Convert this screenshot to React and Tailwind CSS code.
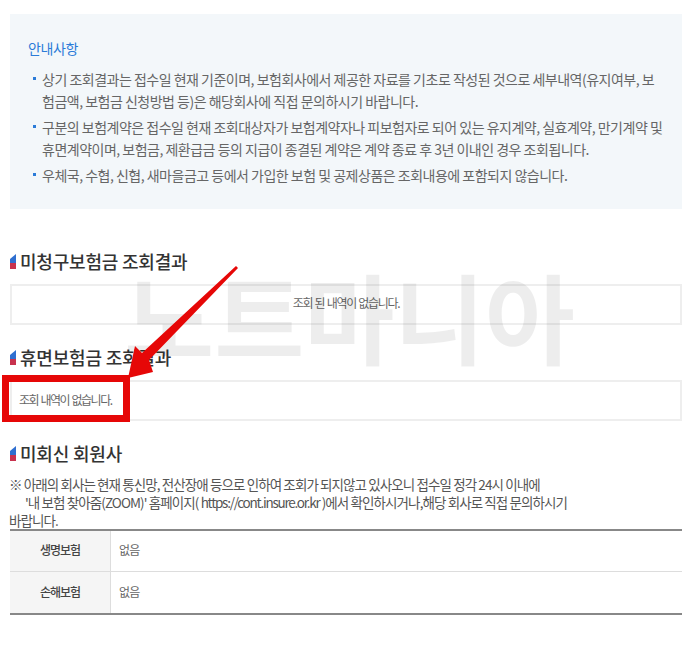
const font = { fontFamily: '"Noto Sans CJK KR", "Noto Sans", sans-serif' };

const notices = [
  "상기 조회결과는 접수일 현재 기준이며, 보험회사에서 제공한 자료를 기초로 작성된 것으로 세부내역(유지여부, 보험금액, 보험금 신청방법 등)은 해당회사에 직접 문의하시기 바랍니다.",
  "구분의 보험계약은 접수일 현재 조회대상자가 보험계약자나 피보험자로 되어 있는 유지계약, 실효계약, 만기계약 및 휴면계약이며, 보험금, 제환급금 등의 지급이 종결된 계약은 계약 종료 후 3년 이내인 경우 조회됩니다.",
  "우체국, 수협, 신협, 새마을금고 등에서 가입한 보험 및 공제상품은 조회내용에 포함되지 않습니다.",
];

const SectionTitle = ({ children, className }) => (
  <h2 className={`flex items-center h-[24px] text-[18px] font-medium text-[#333] tracking-[-0.2px] ${className}`}>
    <svg width="7" height="15" viewBox="0 0 7 15" className="mr-[3px] shrink-0">
      <path d="M0 5 L6 0 V9 H0 Z" fill="#2f6fd0" />
      <path d="M0 9 H6 V15 H0 Z" fill="#c8324e" />
    </svg>
    {children}
  </h2>
);

export default function App() {
  return (
    <div className="relative w-[700px] h-[648px] bg-white overflow-hidden" style={font}>
      <div className="pt-[14px] pl-[10px] pr-[18px]">
        {/* 안내사항 */}
        <div className="h-[195px] bg-[#f3f7fa] pt-[23px] pl-[18px] pr-[18px]">
          <p className="text-[14px] leading-[22px] text-[#2b7bd8] tracking-[-0.4px]">안내사항</p>
          <ul className="mt-[9px]">
            {notices.map((text) => (
              <li key={text} className="relative pl-[14px] mb-[4px] text-[14px] leading-[22px] text-[#666] tracking-[-0.5px]">
                <span className="absolute left-[5px] top-[9px] w-[3px] h-[3px] bg-[#2b7bd8]" />
                {text}
              </li>
            ))}
          </ul>
        </div>

        <SectionTitle className="mt-[40px]">미청구보험금 조회결과</SectionTitle>
        <div className="mt-[11px] h-[41px] border-2 border-[#eeeeee] flex items-center justify-center pb-[3px] text-[12px] text-[#666] tracking-[-1.3px] [word-spacing:1px]">
          조회 된 내역이 없습니다.
        </div>

        <SectionTitle className="mt-[20px]">휴면보험금 조회결과</SectionTitle>
        <div className="mt-[11px] h-[41px] border-2 border-[#eeeeee] flex items-center pl-[7px] pb-[2px] text-[12px] text-[#666] tracking-[-1.45px] [word-spacing:1px]">
          조회 내역이 없습니다.
        </div>

        <SectionTitle className="mt-[20px]">미회신 회원사</SectionTitle>
        <p className="mt-[10px] -ml-[1px] text-[13.5px] leading-[18px] text-[#555] tracking-[-0.9px] w-[590px]">
          ※ 아래의 회사는 현재 통신망, 전산장애 등으로 인하여 조회가 되지않고 있사오니 접수일 정각 24시 이내에
          <br />
          <span className="pl-[16px]">
            '내 보험 찾아줌(ZOOM)' 홈페이지( <span className="tracking-[-1.25px]">https://cont.insure.or.kr</span> )에서 확인하시거나,해당 회사로 직접 문의하시기
          </span>
          <br />
          바랍니다.
        </p>
        <div className="border-t-2 border-b-2 border-[#888]">
          <div className="flex h-[41px] border-b border-[#ddd]">
            <div className="w-[101px] pb-[2px] bg-[#f5f5f5] border-r border-[#ddd] flex items-center justify-center text-[12px] font-medium text-[#444] tracking-[-1px]">생명보험</div>
            <div className="pl-[8px] pb-[2px] flex items-center text-[12px] text-[#666] tracking-[-0.9px]">없음</div>
          </div>
          <div className="flex h-[41px]">
            <div className="w-[101px] pb-[2px] bg-[#f5f5f5] border-r border-[#ddd] flex items-center justify-center text-[12px] font-medium text-[#444] tracking-[-1px]">손해보험</div>
            <div className="pl-[8px] pb-[2px] flex items-center text-[12px] text-[#666] tracking-[-0.9px]">없음</div>
          </div>
        </div>
      </div>

      {/* 워터마크 */}
      <div className="absolute left-[124px] top-[249px] text-[98px] font-semibold leading-[130px] text-black/[0.07] whitespace-nowrap pointer-events-none">노트마니아</div>

      {/* 빨간 강조 박스 + 화살표 */}
      <div className="absolute left-[2px] top-[375px] w-[128px] h-[47px] border-[7px] border-[#e60707]" />
      <svg className="absolute left-0 top-0 pointer-events-none" width="700" height="648" viewBox="0 0 700 648">
        <path d="M236 266 L238 268 L149 360 L153 372 L128 378 L135 346 L142 353 Z" fill="#e60707" />
      </svg>
    </div>
  );
}
